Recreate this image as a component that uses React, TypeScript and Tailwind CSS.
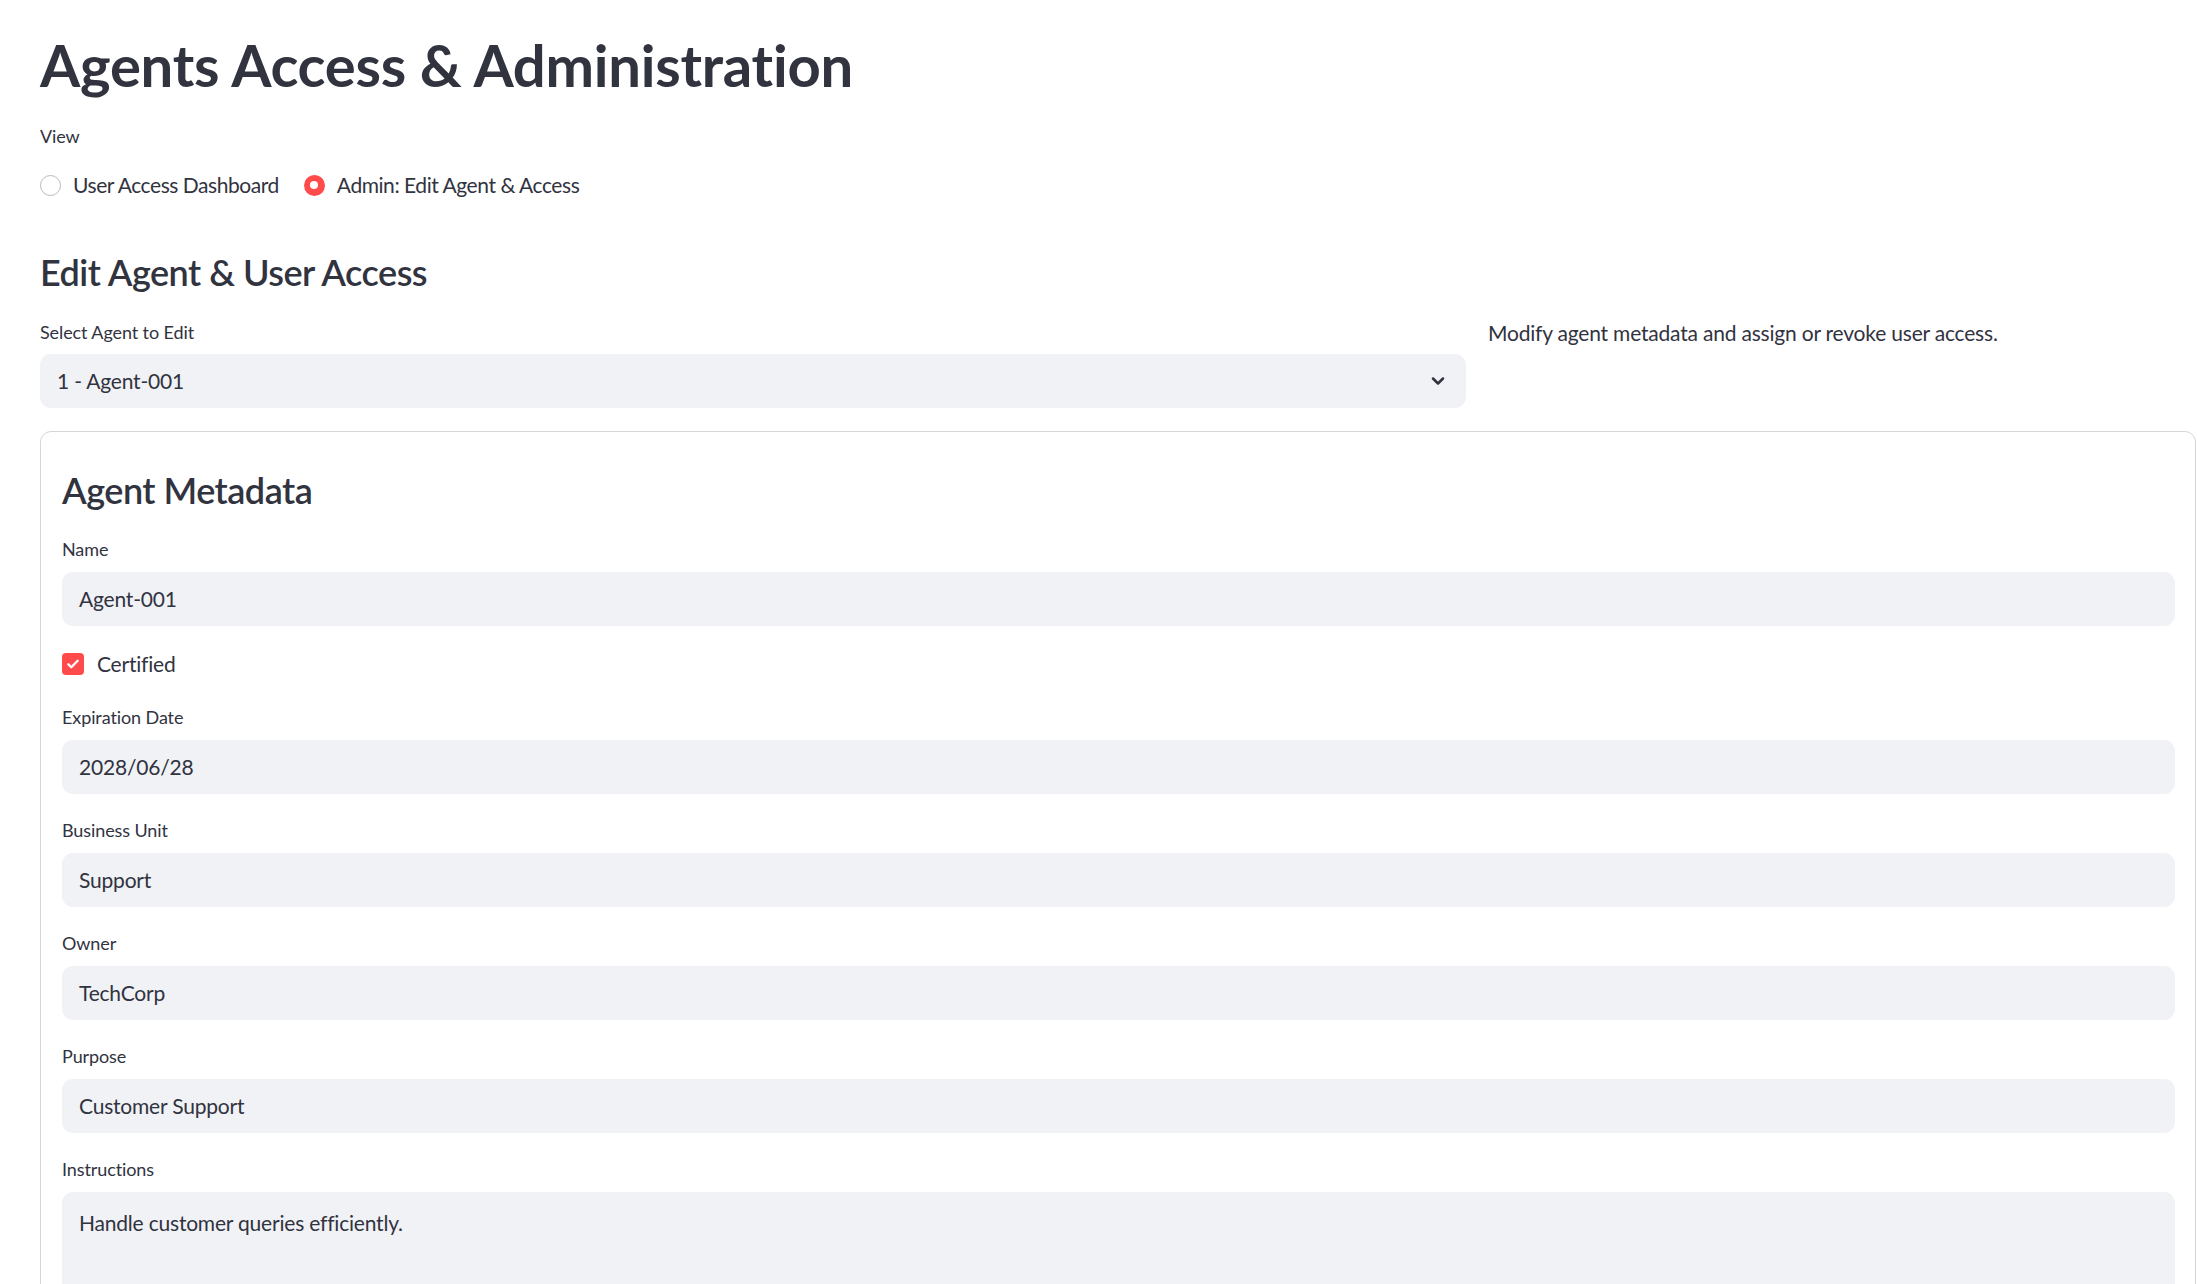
import { ChevronDown } from "lucide-react";

const font = { fontFamily: "Lato, 'Noto Sans', sans-serif" };

function Field({ label, value }: { label: string; value: string }) {
  return (
    <div className="flex flex-col">
      <div className="h-[30px] leading-[30px] text-[18px] tracking-[-0.1px] text-[#31333F] mb-[8px]">{label}</div>
      <div className="h-[54px] rounded-[11px] bg-[#F0F2F6] px-[17px] flex items-center text-[21px] tracking-[-0.2px] text-[#31333F]">
        {value}
      </div>
    </div>
  );
}

function Radio({ checked, label }: { checked?: boolean; label: string }) {
  return (
    <div className="flex items-center gap-[12px]">
      {checked ? (
        <span className="w-[21px] h-[21px] rounded-full bg-[#FF4B4B] flex items-center justify-center">
          <span className="w-[8px] h-[8px] rounded-full bg-white" />
        </span>
      ) : (
        <span className="w-[21px] h-[21px] rounded-full border border-[#b9bac0] bg-white" />
      )}
      <span className="text-[21px] tracking-[-0.45px] text-[#31333F]">{label}</span>
    </div>
  );
}

export default function App() {
  return (
    <div className="min-h-screen bg-white pl-[40px] pr-[1px] text-[#31333F]" style={font}>
      <h1 className="pt-[28px] h-[101px] text-[58px] tracking-[-0.25px] leading-[73px] font-bold text-[#31333F]">
        Agents Access &amp; Administration
      </h1>

      <div className="mt-[20px] h-[30px] leading-[30px] text-[18px] tracking-[-0.1px]">View</div>
      <div className="mt-[14px] h-[40px] flex items-center gap-[25px]">
        <Radio label="User Access Dashboard" />
        <Radio checked label="Admin: Edit Agent & Access" />
      </div>

      <h3 className="mt-[41px] h-[52px] leading-[52px] text-[36px] tracking-[-0.5px] font-semibold">Edit Agent &amp; User Access</h3>

      <div className="mt-[19px] grid grid-cols-[1426px_1fr] gap-[22px]">
        <div className="flex flex-col">
          <div className="h-[30px] leading-[30px] text-[18px] tracking-[-0.1px] mb-[7px]">Select Agent to Edit</div>
          <div className="h-[54px] rounded-[11px] bg-[#F0F2F6] pl-[17px] pr-[18px] flex items-center justify-between text-[21px] tracking-[-0.2px]">
            <span>1 - Agent-001</span>
            <ChevronDown size={20} strokeWidth={3} className="text-[#31333F]" />
          </div>
        </div>
        <div className="h-[32px] leading-[32px] text-[21px] tracking-[-0.2px]">Modify agent metadata and assign or revoke user access.</div>
      </div>

      <div className="mt-[23px] border border-[#d6d6d9] rounded-[11px] pl-[21px] pr-[20px] pt-[21px] pb-[40px]">
        <h2 className="pt-[14px] h-[60px] leading-[46px] text-[36px] tracking-[-0.5px] font-semibold">Agent Metadata</h2>
        <div className="mt-[21px] flex flex-col gap-[21px]">
          <Field label="Name" value="Agent-001" />
          <div className="h-[34px] flex items-center gap-[13px]">
            <span className="w-[22px] h-[22px] rounded-[4px] bg-[#FF4B4B] flex items-center justify-center">
              <svg width="14" height="14" viewBox="0 0 24 24" fill="none" stroke="white" strokeWidth="4" strokeLinecap="round" strokeLinejoin="round">
                <path d="M4 12.5l5 5L20 6.5" />
              </svg>
            </span>
            <span className="text-[21px] tracking-[-0.2px]">Certified</span>
          </div>
          <Field label="Expiration Date" value="2028/06/28" />
          <Field label="Business Unit" value="Support" />
          <Field label="Owner" value="TechCorp" />
          <Field label="Purpose" value="Customer Support" />
          <div className="flex flex-col">
            <div className="h-[30px] leading-[30px] text-[18px] tracking-[-0.1px] mb-[8px]">Instructions</div>
            <div className="h-[130px] rounded-[11px] bg-[#F0F2F6] px-[17px] pt-[15px] leading-[32px] text-[21px] tracking-[-0.2px]">
              Handle customer queries efficiently.
            </div>
          </div>
        </div>
      </div>
    </div>
  );
}
